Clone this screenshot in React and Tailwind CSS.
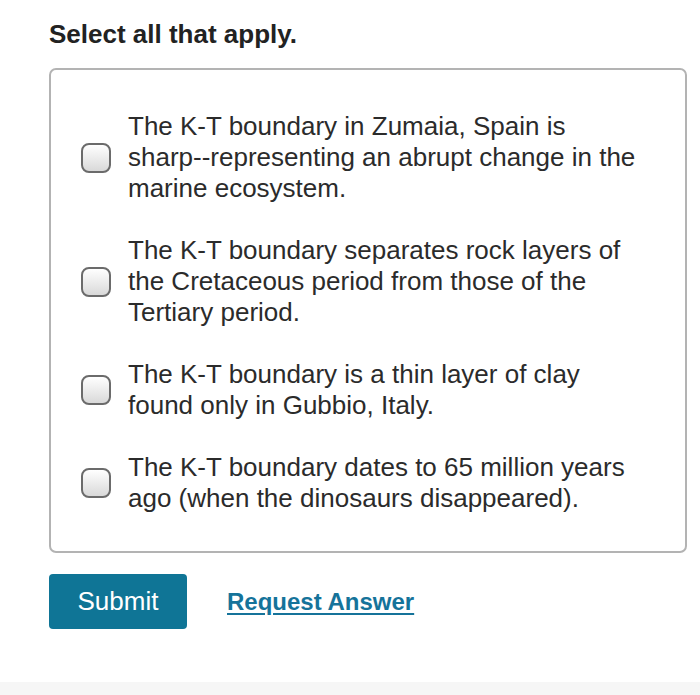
import React from "react";

const options = [
  "The K-T boundary in Zumaia, Spain is sharp--representing an abrupt change in the marine ecosystem.",
  "The K-T boundary separates rock layers of the Cretaceous period from those of the Tertiary period.",
  "The K-T boundary is a thin layer of clay found only in Gubbio, Italy.",
  "The K-T boundary dates to 65 million years ago (when the dinosaurs disappeared).",
];

function Checkbox() {
  return (
    <div className="w-[30px] h-[30px] shrink-0 rounded-[8px] border-2 border-[#6b6b6b] bg-gradient-to-b from-[#ffffff] to-[#d9d9d9]" />
  );
}

export default function App() {
  return (
    <div className="w-[700px] h-[695px] bg-white flex flex-col" style={{ fontFamily: '"Liberation Sans", Arial, sans-serif' }}>
      <div className="flex-1 pl-[49px] pr-[13px] pt-[17px]">
        <h2 className="text-[26px] font-bold text-[#222] leading-[34px]">Select all that apply.</h2>
        <div className="mt-[17px] border-2 border-[#b3b3b3] rounded-[7px] pt-[41px] pb-[37px] pl-[30px] pr-[20px] flex flex-col gap-[31px]">
          {options.map((t, i) => (
            <div key={i} className="flex items-center gap-[17px]">
              <Checkbox />
              <div className="text-[26px] leading-[31px] text-[#2b2b2b] max-w-[512px]">{t}</div>
            </div>
          ))}
        </div>
        <div className="mt-[21px] flex items-center gap-[40px]">
          <button className="w-[138px] h-[55px] rounded-[4px] bg-[#0f7596] text-white text-[26px] flex items-center justify-center">
            Submit
          </button>
          <a className="text-[24px] font-bold text-[#15739a] underline decoration-2 underline-offset-[3px]">Request Answer</a>
        </div>
      </div>
      <div className="h-[13px] bg-[#f6f6f6]" />
    </div>
  );
}
